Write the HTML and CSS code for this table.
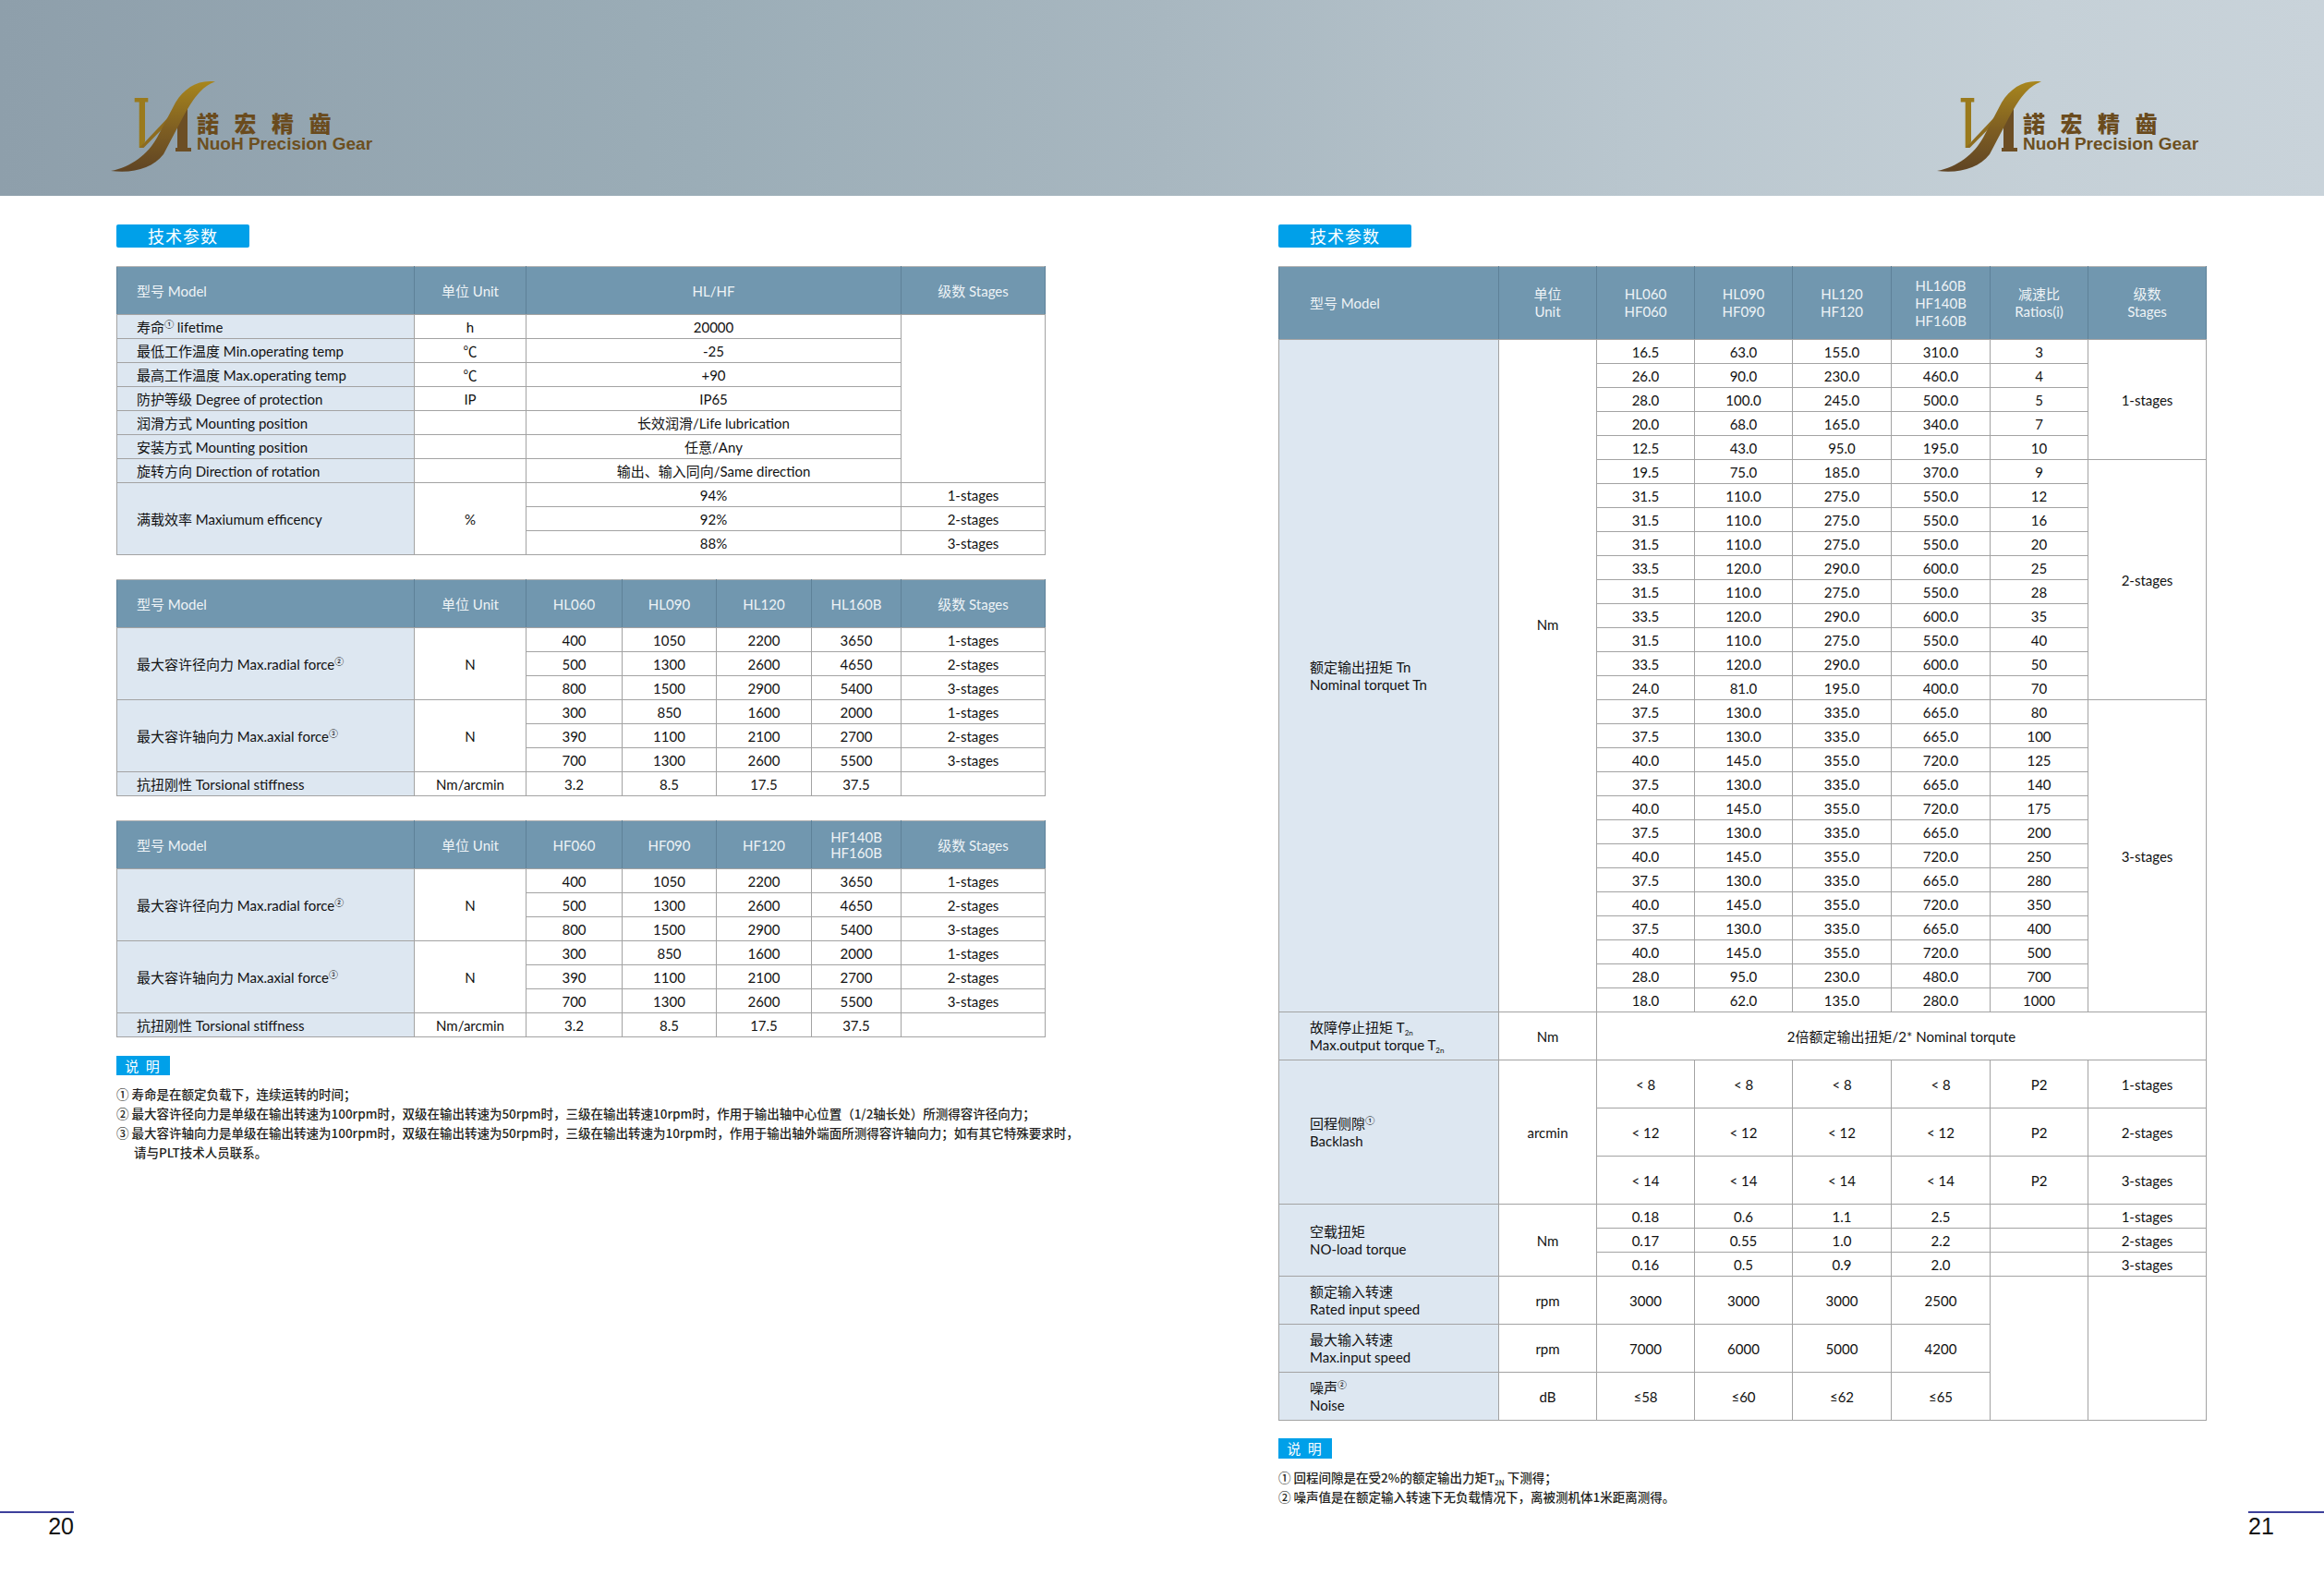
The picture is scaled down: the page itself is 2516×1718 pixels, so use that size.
FILE: index.html
```html
<!DOCTYPE html>
<html lang="zh-CN">
<head>
<meta charset="utf-8">
<title>技术参数</title>
<link rel="stylesheet" href="styles.css">
</head>
<body>
<header class="band">
  <div class="logo">
    <svg class="mark" viewBox="0 0 115 102" width="115" height="102">
      <defs>
        <linearGradient id="sw1" x1="0" y1="0" x2="0" y2="1">
          <stop offset="0" stop-color="#a8861d"/>
          <stop offset="0.55" stop-color="#7d5d22"/>
          <stop offset="1" stop-color="#5f4424"/>
        </linearGradient>
      </defs>
      <polygon fill="#9a7a1c" points="25.7,19 40.3,19 40.3,23.5 37,23.5 37,66 33.5,73 30.7,73 30.7,23.5 25.7,23.5"/>
      <polygon fill="#8d6c1f" points="31,73 35.5,73 77,31 73.5,28"/>
      <path fill="#6c4e24" d="M72 28 H83 V73 H87 V77 H70 V73 H72 Z"/>
      <path fill="url(#sw1)" d="M0 98 C25 101 45 95 57 80 L78 40 C88 22 98 6 113 1.5 C95 -1 80 8 70 24 L50 62 C40 80 22 94 0 98 Z"/>
    </svg>
    <div class="logo-text">
      <div class="logo-cn">諾宏精齒</div>
      <div class="logo-en">NuoH Precision Gear</div>
    </div>
  </div>
  <div class="logo">
    <svg class="mark" viewBox="0 0 115 102" width="115" height="102">
      <defs>
        <linearGradient id="sw2" x1="0" y1="0" x2="0" y2="1">
          <stop offset="0" stop-color="#a8861d"/>
          <stop offset="0.55" stop-color="#7d5d22"/>
          <stop offset="1" stop-color="#5f4424"/>
        </linearGradient>
      </defs>
      <polygon fill="#9a7a1c" points="25.7,19 40.3,19 40.3,23.5 37,23.5 37,66 33.5,73 30.7,73 30.7,23.5 25.7,23.5"/>
      <polygon fill="#8d6c1f" points="31,73 35.5,73 77,31 73.5,28"/>
      <path fill="#6c4e24" d="M72 28 H83 V73 H87 V77 H70 V73 H72 Z"/>
      <path fill="url(#sw2)" d="M0 98 C25 101 45 95 57 80 L78 40 C88 22 98 6 113 1.5 C95 -1 80 8 70 24 L50 62 C40 80 22 94 0 98 Z"/>
    </svg>
    <div class="logo-text">
      <div class="logo-cn">諾宏精齒</div>
      <div class="logo-en">NuoH Precision Gear</div>
    </div>
  </div>
</header>

<main class="spread">
  <section class="page">
    <div class="content">
      <div class="tag">技术参数</div>

      <table class="spec">
        <colgroup><col class="c-model"><col class="c-unit"><col class="c-wide"><col class="c-stage"></colgroup>
        <thead>
          <tr><th class="th-left">型号 Model</th><th>单位 Unit</th><th>HL/HF</th><th>级数 Stages</th></tr>
        </thead>
        <tbody>
          <tr><td class="lab">寿命<sup class="sup">①</sup> lifetime</td><td>h</td><td>20000</td><td rowspan="7"></td></tr>
          <tr><td class="lab">最低工作温度 Min.operating temp</td><td>℃</td><td>-25</td></tr>
          <tr><td class="lab">最高工作温度 Max.operating temp</td><td>℃</td><td>+90</td></tr>
          <tr><td class="lab">防护等级 Degree of protection</td><td>IP</td><td>IP65</td></tr>
          <tr><td class="lab">润滑方式 Mounting position</td><td></td><td>长效润滑/Life lubrication</td></tr>
          <tr><td class="lab">安装方式 Mounting position</td><td></td><td>任意/Any</td></tr>
          <tr><td class="lab">旋转方向 Direction of rotation</td><td></td><td>输出、输入同向/Same direction</td></tr>
          <tr><td class="lab" rowspan="3">满载效率 Maxiumum efficency</td><td rowspan="3">%</td><td>94%</td><td>1-stages</td></tr>
          <tr><td>92%</td><td>2-stages</td></tr>
          <tr><td>88%</td><td>3-stages</td></tr>
        </tbody>
      </table>

      <table class="spec">
        <colgroup><col class="c-model"><col class="c-unit"><col class="c-n1"><col class="c-n2"><col class="c-n3"><col class="c-n4"><col class="c-stage"></colgroup>
        <thead>
          <tr><th class="th-left">型号 Model</th><th>单位 Unit</th><th>HL060</th><th>HL090</th><th>HL120</th><th>HL160B</th><th>级数 Stages</th></tr>
        </thead>
        <tbody>
          <tr><td class="lab" rowspan="3">最大容许径向力 Max.radial force<sup class="sup">②</sup></td><td rowspan="3">N</td><td>400</td><td>1050</td><td>2200</td><td>3650</td><td>1-stages</td></tr>
          <tr><td>500</td><td>1300</td><td>2600</td><td>4650</td><td>2-stages</td></tr>
          <tr><td>800</td><td>1500</td><td>2900</td><td>5400</td><td>3-stages</td></tr>
          <tr><td class="lab" rowspan="3">最大容许轴向力 Max.axial force<sup class="sup">③</sup></td><td rowspan="3">N</td><td>300</td><td>850</td><td>1600</td><td>2000</td><td>1-stages</td></tr>
          <tr><td>390</td><td>1100</td><td>2100</td><td>2700</td><td>2-stages</td></tr>
          <tr><td>700</td><td>1300</td><td>2600</td><td>5500</td><td>3-stages</td></tr>
          <tr><td class="lab">抗扭刚性 Torsional stiffness</td><td>Nm/arcmin</td><td>3.2</td><td>8.5</td><td>17.5</td><td>37.5</td><td></td></tr>
        </tbody>
      </table>

      <table class="spec">
        <colgroup><col class="c-model"><col class="c-unit"><col class="c-n1"><col class="c-n2"><col class="c-n3"><col class="c-n4"><col class="c-stage"></colgroup>
        <thead>
          <tr><th class="th-left">型号 Model</th><th>单位 Unit</th><th>HF060</th><th>HF090</th><th>HF120</th><th class="th-two">HF140B<br>HF160B</th><th>级数 Stages</th></tr>
        </thead>
        <tbody>
          <tr><td class="lab" rowspan="3">最大容许径向力 Max.radial force<sup class="sup">②</sup></td><td rowspan="3">N</td><td>400</td><td>1050</td><td>2200</td><td>3650</td><td>1-stages</td></tr>
          <tr><td>500</td><td>1300</td><td>2600</td><td>4650</td><td>2-stages</td></tr>
          <tr><td>800</td><td>1500</td><td>2900</td><td>5400</td><td>3-stages</td></tr>
          <tr><td class="lab" rowspan="3">最大容许轴向力 Max.axial force<sup class="sup">③</sup></td><td rowspan="3">N</td><td>300</td><td>850</td><td>1600</td><td>2000</td><td>1-stages</td></tr>
          <tr><td>390</td><td>1100</td><td>2100</td><td>2700</td><td>2-stages</td></tr>
          <tr><td>700</td><td>1300</td><td>2600</td><td>5500</td><td>3-stages</td></tr>
          <tr><td class="lab">抗扭刚性 Torsional stiffness</td><td>Nm/arcmin</td><td>3.2</td><td>8.5</td><td>17.5</td><td>37.5</td><td></td></tr>
        </tbody>
      </table>

      <div class="note-tag">说 明</div>
      <ol class="notes">
        <li>① 寿命是在额定负载下，连续运转的时间；</li>
        <li>② 最大容许径向力是单级在输出转速为100rpm时，双级在输出转速为50rpm时，三级在输出转速10rpm时，作用于输出轴中心位置（1/2轴长处）所测得容许径向力；</li>
        <li>③ 最大容许轴向力是单级在输出转速为100rpm时，双级在输出转速为50rpm时，三级在输出转速为10rpm时，作用于输出轴外端面所测得容许轴向力；如有其它特殊要求时，<br>请与PLT技术人员联系。</li>
      </ol>
    </div>
    <footer class="folio folio-left">20</footer>
  </section>

  <section class="page">
    <div class="content">
      <div class="tag">技术参数</div>

      <table class="spec spec-r">
        <colgroup><col class="r-model"><col class="r-col"><col class="r-col"><col class="r-col"><col class="r-col2"><col class="r-col2"><col class="r-col"><col class="r-stage"></colgroup>
        <thead>
          <tr class="tr-head">
            <th class="th-left th-rl">型号 Model</th>
            <th>单位<br>Unit</th>
            <th>HL060<br>HF060</th>
            <th>HL090<br>HF090</th>
            <th>HL120<br>HF120</th>
            <th>HL160B<br>HF140B<br>HF160B</th>
            <th>减速比<br>Ratios(i)</th>
            <th>级数<br>Stages</th>
          </tr>
        </thead>
        <tbody>
          <tr><td class="lab lab-r" rowspan="28">额定输出扭矩 Tn<br>Nominal torquet Tn</td><td class="unit-up" rowspan="28">Nm</td><td>16.5</td><td>63.0</td><td>155.0</td><td>310.0</td><td>3</td><td rowspan="5">1-stages</td></tr>
          <tr><td>26.0</td><td>90.0</td><td>230.0</td><td>460.0</td><td>4</td></tr>
          <tr><td>28.0</td><td>100.0</td><td>245.0</td><td>500.0</td><td>5</td></tr>
          <tr><td>20.0</td><td>68.0</td><td>165.0</td><td>340.0</td><td>7</td></tr>
          <tr><td>12.5</td><td>43.0</td><td>95.0</td><td>195.0</td><td>10</td></tr>
          <tr><td>19.5</td><td>75.0</td><td>185.0</td><td>370.0</td><td>9</td><td rowspan="10">2-stages</td></tr>
          <tr><td>31.5</td><td>110.0</td><td>275.0</td><td>550.0</td><td>12</td></tr>
          <tr><td>31.5</td><td>110.0</td><td>275.0</td><td>550.0</td><td>16</td></tr>
          <tr><td>31.5</td><td>110.0</td><td>275.0</td><td>550.0</td><td>20</td></tr>
          <tr><td>33.5</td><td>120.0</td><td>290.0</td><td>600.0</td><td>25</td></tr>
          <tr><td>31.5</td><td>110.0</td><td>275.0</td><td>550.0</td><td>28</td></tr>
          <tr><td>33.5</td><td>120.0</td><td>290.0</td><td>600.0</td><td>35</td></tr>
          <tr><td>31.5</td><td>110.0</td><td>275.0</td><td>550.0</td><td>40</td></tr>
          <tr><td>33.5</td><td>120.0</td><td>290.0</td><td>600.0</td><td>50</td></tr>
          <tr><td>24.0</td><td>81.0</td><td>195.0</td><td>400.0</td><td>70</td></tr>
          <tr><td>37.5</td><td>130.0</td><td>335.0</td><td>665.0</td><td>80</td><td rowspan="13">3-stages</td></tr>
          <tr><td>37.5</td><td>130.0</td><td>335.0</td><td>665.0</td><td>100</td></tr>
          <tr><td>40.0</td><td>145.0</td><td>355.0</td><td>720.0</td><td>125</td></tr>
          <tr><td>37.5</td><td>130.0</td><td>335.0</td><td>665.0</td><td>140</td></tr>
          <tr><td>40.0</td><td>145.0</td><td>355.0</td><td>720.0</td><td>175</td></tr>
          <tr><td>37.5</td><td>130.0</td><td>335.0</td><td>665.0</td><td>200</td></tr>
          <tr><td>40.0</td><td>145.0</td><td>355.0</td><td>720.0</td><td>250</td></tr>
          <tr><td>37.5</td><td>130.0</td><td>335.0</td><td>665.0</td><td>280</td></tr>
          <tr><td>40.0</td><td>145.0</td><td>355.0</td><td>720.0</td><td>350</td></tr>
          <tr><td>37.5</td><td>130.0</td><td>335.0</td><td>665.0</td><td>400</td></tr>
          <tr><td>40.0</td><td>145.0</td><td>355.0</td><td>720.0</td><td>500</td></tr>
          <tr><td>28.0</td><td>95.0</td><td>230.0</td><td>480.0</td><td>700</td></tr>
          <tr><td>18.0</td><td>62.0</td><td>135.0</td><td>280.0</td><td>1000</td></tr>

          <tr class="tall"><td class="lab lab-r">故障停止扭矩 T<sub class="sub">2n</sub><br>Max.output torque T<sub class="sub">2n</sub></td><td>Nm</td><td colspan="6">2倍额定输出扭矩/2* Nominal torqute</td></tr>

          <tr class="tall"><td class="lab lab-r" rowspan="3">回程侧隙<sup class="sup">①</sup><br>Backlash</td><td rowspan="3">arcmin</td><td>&lt; 8</td><td>&lt; 8</td><td>&lt; 8</td><td>&lt; 8</td><td>P2</td><td>1-stages</td></tr>
          <tr class="tall"><td>&lt; 12</td><td>&lt; 12</td><td>&lt; 12</td><td>&lt; 12</td><td>P2</td><td>2-stages</td></tr>
          <tr class="tall"><td>&lt; 14</td><td>&lt; 14</td><td>&lt; 14</td><td>&lt; 14</td><td>P2</td><td>3-stages</td></tr>

          <tr><td class="lab lab-r" rowspan="3">空载扭矩<br>NO-load torque</td><td rowspan="3">Nm</td><td>0.18</td><td>0.6</td><td>1.1</td><td>2.5</td><td></td><td>1-stages</td></tr>
          <tr><td>0.17</td><td>0.55</td><td>1.0</td><td>2.2</td><td></td><td>2-stages</td></tr>
          <tr><td>0.16</td><td>0.5</td><td>0.9</td><td>2.0</td><td></td><td>3-stages</td></tr>

          <tr class="tall"><td class="lab lab-r">额定输入转速<br>Rated input speed</td><td>rpm</td><td>3000</td><td>3000</td><td>3000</td><td>2500</td><td rowspan="3"></td><td rowspan="3"></td></tr>
          <tr class="tall"><td class="lab lab-r">最大输入转速<br>Max.input speed</td><td>rpm</td><td>7000</td><td>6000</td><td>5000</td><td>4200</td></tr>
          <tr class="tall"><td class="lab lab-r">噪声<sup class="sup">②</sup><br>Noise</td><td>dB</td><td>≤58</td><td>≤60</td><td>≤62</td><td>≤65</td></tr>
        </tbody>
      </table>

      <div class="note-tag note-tag-r">说 明</div>
      <ol class="notes">
        <li>① 回程间隙是在受2%的额定输出力矩T<sub class="sub">2N</sub> 下测得；</li>
        <li>② 噪声值是在额定输入转速下无负载情况下，离被测机体1米距离测得。</li>
      </ol>
    </div>
    <footer class="folio folio-right">21</footer>
  </section>
</main>
</body>
</html>
```

FILE: styles.css
```css
html, body {
  margin: 0;
  padding: 0;
  background: #ffffff;
}

body {
  width: 2516px;
  height: 1718px;
  overflow: hidden;
  font-family: "Lato", "Noto Sans CJK SC", sans-serif;
  color: #1c1c1c;
}

/* ---------- header band ---------- */
.band {
  box-sizing: border-box;
  height: 212px;
  padding: 87px 136px 0 120px;
  display: flex;
  justify-content: space-between;
  align-items: flex-start;
  background: linear-gradient(90deg, #8e9fab 0%, #9badb7 30%, #a8b7c0 50%, #b9c6ce 70%, #c5d0d7 88%, #c9d3da 100%);
}

.logo {
  display: flex;
  align-items: flex-start;
  width: 283px;
}

.mark {
  flex: none;
  display: block;
}

.logo-text {
  margin-left: -22px;
  padding-top: 34px;
}

.logo-cn {
  font-family: "Noto Sans CJK TC", "Noto Sans CJK SC", sans-serif;
  font-weight: 900;
  font-size: 24px;
  line-height: 24px;
  letter-spacing: 16.5px;
  color: #6a4b1d;
  white-space: nowrap;
}

.logo-en {
  font-family: "Liberation Sans", Arial, sans-serif;
  font-weight: bold;
  font-size: 19px;
  line-height: 20px;
  color: #6c4f20;
  white-space: nowrap;
  margin-top: 1px;
}

/* ---------- pages ---------- */
.spread {
  display: flex;
  height: 1506px;
}

.page {
  width: 1258px;
  height: 1506px;
  display: flex;
  flex-direction: column;
}

.content {
  padding: 31px 0 0 126px;
}

.tag {
  width: 144px;
  height: 25px;
  line-height: 25px;
  background: #00a0e9;
  color: #ffffff;
  border-radius: 2px;
  text-align: center;
  font-family: "Noto Sans CJK SC", sans-serif;
  font-size: 18px;
  letter-spacing: 1px;
  margin-bottom: 20px;
}

/* ---------- tables ---------- */
.spec {
  width: 1005px;
  table-layout: fixed;
  border-collapse: collapse;
  font-family: "Lato", "Noto Sans CJK SC", sans-serif;
  font-size: 15px;
  line-height: 18px;
  color: #111111;
  margin-bottom: 26px;
  border: 1px solid #a8a8a8;
}

.spec th,
.spec td {
  border: 1px solid #a3a3a3;
  padding: 0;
  height: 25px;
  text-align: center;
  vertical-align: middle;
  white-space: nowrap;
}

.spec thead th {
  height: 51px;
  background: #7197af;
  color: #eef3f6;
  font-weight: 400;
  border-left-color: #5e8198;
  border-right-color: #5e8198;
  border-top-color: #b3b3b3;
  border-bottom-color: #a3a3a3;
}

.spec .th-left {
  text-align: left;
  padding-left: 21px;
}

.spec .th-two {
  line-height: 17px;
}

.spec td.lab {
  background: #dde7f1;
  text-align: left;
  padding-left: 21px;
}

.c-model { width: 322px; }
.c-unit { width: 121px; }
.c-wide { width: 406px; }
.c-stage { width: 156px; }
.c-n1 { width: 104px; }
.c-n2 { width: 102px; }
.c-n3 { width: 103px; }
.c-n4 { width: 97px; }

/* right table */
.spec-r {
  margin-bottom: 19px;
}

.spec-r .tr-head th {
  height: 78px;
  line-height: 19px;
}

.spec-r .th-rl,
.spec-r td.lab-r {
  padding-left: 33px;
}

.spec-r td.lab-r {
  line-height: 19px;
}

.spec-r tr.tall td {
  height: 51px;
}

.spec-r td.unit-up {
  padding-bottom: 112px;
}

.r-model { width: 238px; }
.r-col { width: 106px; }
.r-col2 { width: 107px; }
.r-stage { width: 128px; }

.sup {
  font-size: 9px;
  line-height: 0;
  vertical-align: 6px;
}

.sub {
  font-size: 8px;
  line-height: 0;
  vertical-align: -3px;
}

/* ---------- notes ---------- */
.note-tag {
  width: 58px;
  height: 21px;
  line-height: 21px;
  margin-top: -6px;
  background: #00a0e9;
  color: #ffffff;
  text-align: center;
  font-family: "Noto Sans CJK SC", sans-serif;
  font-size: 15px;
  letter-spacing: 2px;
}

.note-tag-r {
  margin-top: 0;
  height: 22px;
  line-height: 22px;
}

.notes {
  list-style: none;
  margin: 10px 0 0 0;
  padding: 0;
  font-family: "Noto Sans CJK SC", sans-serif;
  font-weight: 500;
  font-size: 13.5px;
  line-height: 21px;
  color: #231f20;
}

.notes li {
  padding-left: 19px;
  text-indent: -19px;
  white-space: nowrap;
}

/* ---------- folios ---------- */
.folio {
  margin-top: auto;
  height: 80px;
  border-top: 2px solid #3d409b;
  font-family: "Liberation Sans", Arial, sans-serif;
  font-size: 25px;
  line-height: 28px;
  color: #111111;
}

.folio-left {
  width: 80px;
  align-self: flex-start;
  text-align: right;
}

.folio-right {
  width: 82px;
  align-self: flex-end;
  text-align: left;
}
```
